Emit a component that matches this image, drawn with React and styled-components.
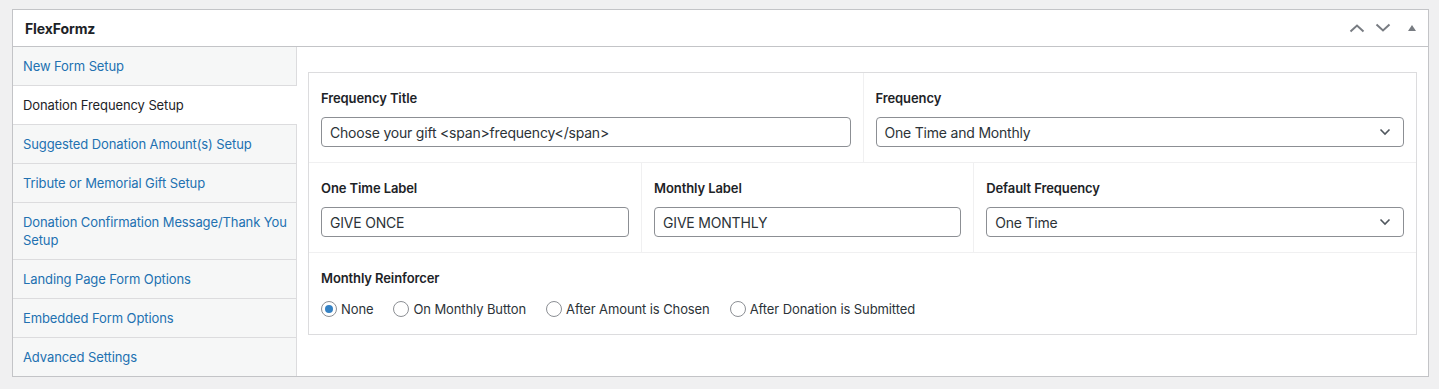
import React from 'react';
import styled, { createGlobalStyle } from 'styled-components';

const GlobalStyle = createGlobalStyle`
    html, body {
        margin: 0;
        padding: 0;
        background: #f0f0f1;
    }
    body {
        font-family: Inter, Roboto, "Liberation Sans", sans-serif;
        font-size: 13px;
        letter-spacing: -0.1px;
        color: #3c434a;
    }
    * { box-sizing: border-box; }
`;

const Page = styled.div`
    padding: 9px 10px 12px 12px;
`;

const Postbox = styled.div`
    background: #fff;
    border: 1px solid #c3c4c7;
`;

const Header = styled.div`
    display: flex;
    align-items: center;
    justify-content: space-between;
    height: 37px;
    padding-left: 12px;
    border-bottom: 1px solid #c3c4c7;
`;

const Title = styled.h2`
    margin: 0;
    font-size: 14px;
    font-weight: 700;
    color: #1d2327;
`;

const HandleActions = styled.div`
    display: flex;
    align-items: center;
    height: 100%;
`;

const HandleButton = styled.button`
    display: flex;
    align-items: center;
    justify-content: center;
    width: ${(p) => p.w}px;
    height: 100%;
    padding: 0;
    border: 0;
    background: none;
    color: #787c82;
    cursor: pointer;
`;

const Body = styled.div`
    display: flex;
    align-items: flex-start;
`;

const Sidebar = styled.ul`
    width: 284px;
    flex-shrink: 0;
    margin: 0;
    padding: 0;
    list-style: none;
    background: #f6f7f7;
    border-right: 1px solid #dcdcde;
`;

const Tab = styled.li`
    padding: 10px 4px 10px 10px;
    line-height: 18px;
    border-bottom: 1px solid #dcdcde;
    color: ${(p) => (p.active ? '#1d2327' : '#2271b1')};
    background: ${(p) => (p.active ? '#fff' : 'transparent')};
    margin-right: ${(p) => (p.active ? '-1px' : '0')};
    cursor: pointer;
    &:last-child {
        border-bottom: 0;
    }
`;

const Main = styled.div`
    flex: 1;
    padding: 25px 11px 0 11px;
`;

const Panel = styled.div`
    border: 1px solid #dcdcde;
`;

const Row = styled.div`
    display: grid;
    grid-template-columns: ${(p) => p.cols};
    border-bottom: 1px solid #f0f0f1;
    &:last-child {
        border-bottom: 0;
    }
`;

const Cell = styled.div`
    padding: 16px 12px 15px;
    border-left: 1px solid #f0f0f1;
    &:first-child {
        border-left: 0;
    }
`;

const Label = styled.div`
    font-weight: 600;
    line-height: 18px;
    color: #1d2327;
    margin-bottom: 10px;
`;

const TextInput = styled.input`
    display: block;
    width: 100%;
    height: 30px;
    padding: 0 8px;
    border: 1px solid #8c8f94;
    border-radius: 4px;
    font-family: inherit;
    font-size: 14px;
    letter-spacing: -0.2px;
    color: #2c3338;
    background: #fff;
`;

const SelectBox = styled.div`
    display: flex;
    align-items: center;
    justify-content: space-between;
    height: 30px;
    padding: 0 12px 0 8px;
    border: 1px solid #8c8f94;
    border-radius: 4px;
    font-size: 14px;
    letter-spacing: -0.2px;
    color: #2c3338;
    background: #fff;
`;

const RadioGroup = styled.div`
    display: flex;
    align-items: center;
    gap: 20px;
    margin-top: 12px;
    height: 20px;
`;

const RadioLabel = styled.label`
    display: flex;
    align-items: center;
    gap: 4px;
    color: #2c3338;
    line-height: 20px;
`;

const RadioCircle = styled.span`
    display: flex;
    align-items: center;
    justify-content: center;
    width: 16px;
    height: 16px;
    border: 1px solid #8c8f94;
    border-radius: 50%;
    background: #fff;
    &::before {
        content: '';
        width: 8px;
        height: 8px;
        border-radius: 50%;
        background: ${(p) => (p.checked ? '#3582c4' : 'transparent')};
    }
`;

const tabs = [
    'New Form Setup',
    'Donation Frequency Setup',
    'Suggested Donation Amount(s) Setup',
    'Tribute or Memorial Gift Setup',
    'Donation Confirmation Message/Thank You Setup',
    'Landing Page Form Options',
    'Embedded Form Options',
    'Advanced Settings',
];

const reinforcers = ['None', 'On Monthly Button', 'After Amount is Chosen', 'After Donation is Submitted'];

const Chevron = ({ up }) => (
    <svg width="16" height="10" viewBox="0 0 16 10" fill="none" stroke="currentColor" strokeWidth="2">
        {up ? <path d="M1.5 8.5 L8 2.5 L14.5 8.5" /> : <path d="M1.5 1.5 L8 7.5 L14.5 1.5" />}
    </svg>
);

const Triangle = () => (
    <svg width="10" height="8" viewBox="0 0 10 8" fill="currentColor">
        <path d="M1 7 L5 1 L9 7 Z" />
    </svg>
);

const SelectArrow = () => (
    <svg width="12" height="8" viewBox="0 0 12 8" fill="none" stroke="#50575e" strokeWidth="1.6">
        <path d="M1.5 1.5 L6 6 L10.5 1.5" />
    </svg>
);

const Select = ({ value }) => (
    <SelectBox>
        <span>{value}</span>
        <SelectArrow />
    </SelectBox>
);

export default function App() {
    return (
        <Page>
            <GlobalStyle />
            <Postbox>
                <Header>
                    <Title>FlexFormz</Title>
                    <HandleActions>
                        <HandleButton w={26}><Chevron up /></HandleButton>
                        <HandleButton w={26}><Chevron /></HandleButton>
                        <HandleButton w={32}><Triangle /></HandleButton>
                    </HandleActions>
                </Header>
                <Body>
                    <Sidebar>
                        {tabs.map((t, i) => (
                            <Tab key={t} active={i === 1}>{t}</Tab>
                        ))}
                    </Sidebar>
                    <Main>
                        <Panel>
                            <Row cols="1fr 1fr">
                                <Cell>
                                    <Label>Frequency Title</Label>
                                    <TextInput readOnly value="Choose your gift <span>frequency</span>" />
                                </Cell>
                                <Cell>
                                    <Label>Frequency</Label>
                                    <Select value="One Time and Monthly" />
                                </Cell>
                            </Row>
                            <Row cols="30% 30% 40%">
                                <Cell>
                                    <Label>One Time Label</Label>
                                    <TextInput readOnly value="GIVE ONCE" />
                                </Cell>
                                <Cell>
                                    <Label>Monthly Label</Label>
                                    <TextInput readOnly value="GIVE MONTHLY" />
                                </Cell>
                                <Cell>
                                    <Label>Default Frequency</Label>
                                    <Select value="One Time" />
                                </Cell>
                            </Row>
                            <Row cols="1fr">
                                <Cell>
                                    <Label>Monthly Reinforcer</Label>
                                    <RadioGroup>
                                        {reinforcers.map((r, i) => (
                                            <RadioLabel key={r}>
                                                <RadioCircle checked={i === 0} />
                                                {r}
                                            </RadioLabel>
                                        ))}
                                    </RadioGroup>
                                </Cell>
                            </Row>
                        </Panel>
                    </Main>
                </Body>
            </Postbox>
        </Page>
    );
}
